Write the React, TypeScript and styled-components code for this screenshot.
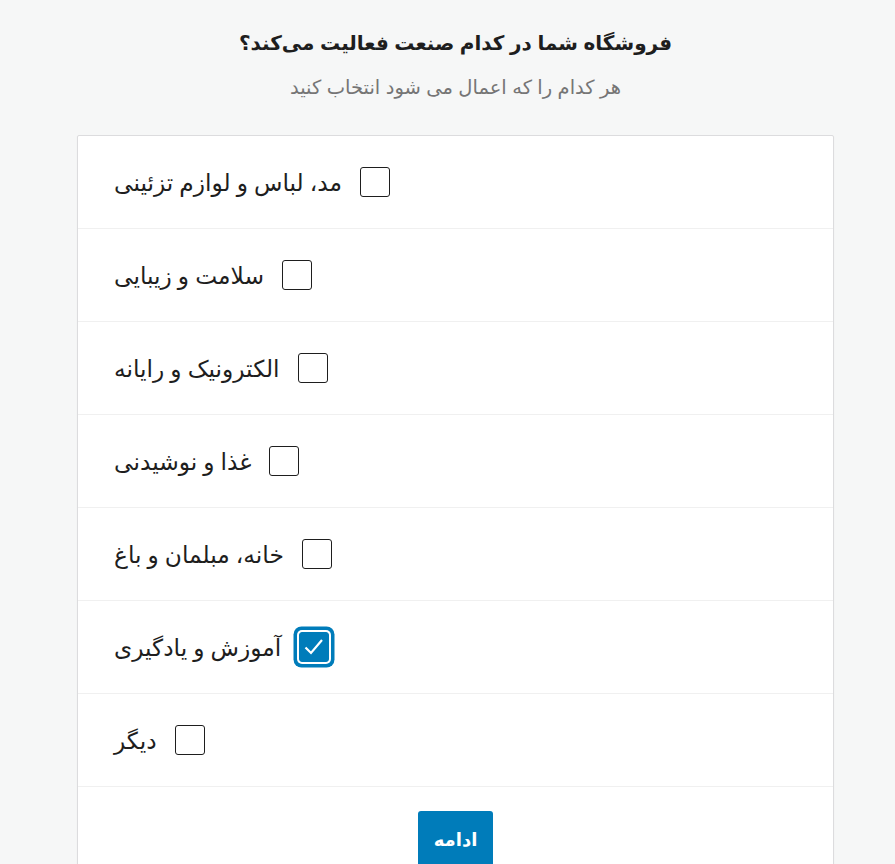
import React, { useState } from "react";
import styled, { createGlobalStyle } from "styled-components";

const Global = createGlobalStyle`
  html, body { margin: 0; padding: 0; background: #f6f7f7; }
  body { font-family: "Noto Sans", "DejaVu Sans", sans-serif; }
`;

const Page = styled.div`
  padding: 0 0 0 16px;
  direction: rtl;
`;

const Header = styled.div`
  display: flex;
  flex-direction: column;
  align-items: center;
  padding-top: 28px;
  gap: 16px;
`;

const Title = styled.h1`
  margin: 0;
  font-family: "Liberation Sans", "DejaVu Sans", sans-serif;
  font-weight: 700;
  font-size: 20px;
  line-height: 30px;
  color: #1e1e1e;
`;

const Subtitle = styled.p`
  margin: 0;
  font-family: "Liberation Sans", "DejaVu Sans", sans-serif;
  font-size: 19.5px;
  line-height: 26px;
  color: #757575;
`;

const Card = styled.div`
  width: 755px;
  margin: 35px auto 0;
  background: #fff;
  border: 1px solid #dcdcde;
  box-shadow: 0 1px 2px rgba(0, 0, 0, 0.04);
  border-radius: 2px;
`;

const Row = styled.label`
  display: flex;
  direction: ltr;
  align-items: center;
  height: 92px;
  padding-left: 36px;
  gap: 18px;
  border-bottom: 1px solid #f0f0f0;
  cursor: pointer;
`;

const Label = styled.span`
  direction: rtl;
  font-family: "Noto Sans", "DejaVu Sans", sans-serif;
  font-size: 23.3px;
  color: #1e1e1e;
`;

const Box = styled.span<{ $checked: boolean }>`
  width: 30px;
  height: 30px;
  box-sizing: border-box;
  border-radius: 3px;
  border: 1px solid ${(p) => (p.$checked ? "#007cba" : "#1e1e1e")};
  background: ${(p) => (p.$checked ? "#007cba" : "#fff")};
  box-shadow: ${(p) =>
    p.$checked ? "0 0 0 2px #fff, 0 0 0 5.5px #007cba" : "none"};
  display: flex;
  align-items: center;
  justify-content: center;
  flex-shrink: 0;
`;

const Footer = styled.div`
  display: flex;
  justify-content: center;
  padding: 24px 0 24px;
`;

const Button = styled.button`
  height: 58px;
  padding: 0 16px;
  min-width: 75px;
  border: none;
  border-radius: 3px;
  background: #007cba;
  color: #fff;
  font-family: "Liberation Sans", "DejaVu Sans", sans-serif;
  font-weight: 700;
  font-size: 18px;
  direction: rtl;
  cursor: pointer;
`;

const items = [
  "مد، لباس و لوازم تزئینی",
  "سلامت و زیبایی",
  "الکترونیک و رایانه",
  "غذا و نوشیدنی",
  "خانه، مبلمان و باغ",
  "آموزش و یادگیری",
  "دیگر",
];

export default function App() {
  const [sel, setSel] = useState<number[]>([5]);
  const toggle = (i: number) =>
    setSel((s) => (s.includes(i) ? s.filter((x) => x !== i) : [...s, i]));
  return (
    <Page>
      <Global />
      <Header>
        <Title>فروشگاه شما در کدام صنعت فعالیت می‌کند؟</Title>
        <Subtitle>هر کدام را که اعمال می شود انتخاب کنید</Subtitle>
      </Header>
      <Card>
        {items.map((t, i) => {
          const c = sel.includes(i);
          return (
            <Row key={t} onClick={() => toggle(i)}>
              <Label>{t}</Label>
              <Box $checked={c}>
                {c && (
                  <svg width="24" height="24" viewBox="0 0 24 24">
                    <path
                      d="M3.5 12.5 L9 18 L20 5"
                      fill="none"
                      stroke="#fff"
                      strokeWidth="2.2"
                    />
                  </svg>
                )}
              </Box>
            </Row>
          );
        })}
        <Footer>
          <Button>ادامه</Button>
        </Footer>
      </Card>
    </Page>
  );
}
